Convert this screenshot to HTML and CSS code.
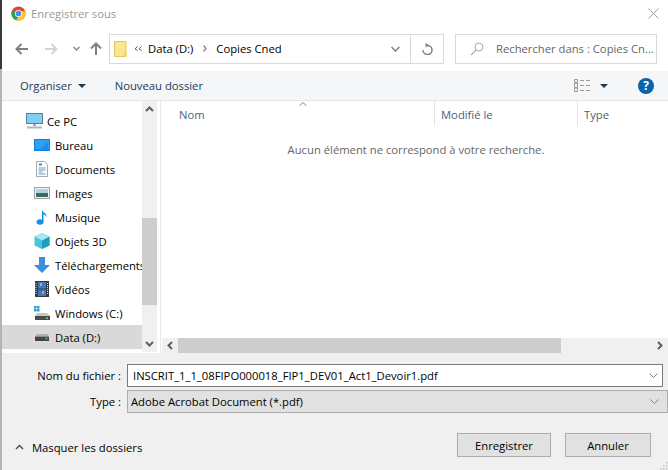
FILE: index.html
```html
<!DOCTYPE html>
<html lang="fr">
<head>
<meta charset="utf-8">
<title>Enregistrer sous</title>
<link rel="stylesheet" href="styles.css">
</head>
<body>
<div class="dialog">
  <header class="titlebar">
    <svg class="chrome" width="15" height="15" viewBox="0 0 16 16"><circle cx="8" cy="8" r="7.500" fill="#e0452f"/><path d="M8 8 1.500 4.200A7.500 7.500 0 0 0 6 15.200Z" fill="#2f9e4d"/><path d="M8 8 6 15.300A7.500 7.500 0 0 0 15.200 5.500H8Z" fill="#f7c52e"/><circle cx="8" cy="8" r="3.800" fill="#fff"/><circle cx="8" cy="8" r="3" fill="#4a8cf0"/></svg>
    <span class="title">Enregistrer sous</span>
    <svg class="close" width="11" height="11" viewBox="0 0 11 11"><path d="M.5.500l10 10M10.500.500l-10 10" stroke="#9a9a9a" fill="none"/></svg>
  </header>
  <nav class="navbar">
    <svg class="nav-ico back" width="13" height="12" viewBox="0 0 13 12"><path d="M13 6H2M6.500 1 1.500 6l5 5" stroke="#7f7f7f" stroke-width="2" fill="none"/></svg>
    <svg class="nav-ico fwd" width="13" height="12" viewBox="0 0 13 12"><path d="M0 6h11M6.500 1l5 5-5 5" stroke="#d2d2d2" stroke-width="2" fill="none"/></svg>
    <svg class="nav-ico drop" width="7" height="5" viewBox="0 0 7 5"><path d="M.5 1l3 3 3-3" stroke="#8a8a8a" stroke-width="1.500" fill="none"/></svg>
    <svg class="nav-ico up" width="12" height="13" viewBox="0 0 12 13"><path d="M6 13V2M1 6.500l5-5 5 5" stroke="#7f7f7f" stroke-width="2" fill="none"/></svg>
    <div class="address">
      <svg class="folder" width="13" height="16" viewBox="0 0 13 16"><path d="M.5.500h11.500v15H.5Z" fill="#fbe58f" stroke="#e7c65e"/><path d="M10 10h2.500v5.500H10Z" fill="#f3d36f"/></svg>
      <svg class="chev" width="8" height="5" viewBox="0 0 8 5"><path d="M3.500.500 1 2.800l2.500 1.700M7.500.500 5 2.800l2.500 1.700" stroke="#555" fill="none"/></svg>
      <span class="crumb">Data (D:)</span>
      <svg class="sep" width="4" height="7" viewBox="0 0 4 7"><path d="M.5.500l2.500 3-2.500 3" stroke="#808080" stroke-width="1.200" fill="none"/></svg>
      <span class="crumb">Copies Cned</span>
      <svg class="addr-drop" width="9" height="6" viewBox="0 0 9 6"><path d="M.5 1l4 4 4-4" stroke="#808080" stroke-width="1.500" fill="none"/></svg>
      <div class="refresh">
        <svg width="11" height="12" viewBox="0 0 11 12"><path d="M5 2.500h.5a4.500 4.500 0 1 1-4.500 4.500" stroke="#808080" stroke-width="1.500" fill="none"/><path d="M3.500 0 7 2.200 3.500 4.500Z" fill="#808080"/></svg>
      </div>
    </div>
    <div class="search">
      <svg width="14" height="14" viewBox="0 0 14 14"><circle cx="9" cy="5" r="4" stroke="#a8a8a8" fill="none"/><path d="M6 8 1 13" stroke="#d0a890" stroke-width="1.300"/></svg>
      <span>Rechercher dans : Copies Cn...</span>
    </div>
  </nav>
  <div class="toolbar">
    <span class="tool">Organiser</span>
    <span class="caret"></span>
    <span class="tool newdir">Nouveau dossier</span>
    <svg class="views" width="17" height="13" viewBox="0 0 17 13"><path d="M.5.500h3v3h-3ZM.5 4.500h3v4h-3ZM.5 9h3v3.500h-3Z" fill="none" stroke="#9a9a9a"/><path d="M6 1.500h4M12 1.500h4M6 6.500h4M12 6.500h4M6 11.500h4M12 11.500h4" stroke="#9a9a9a"/></svg>
    <span class="caret view-caret"></span>
    <span class="help">?</span>
  </div>
  <main class="main">
    <div class="side-wrap">
      <ul class="tree">
        <li class="root"><svg width="17" height="16" viewBox="0 0 17 16"><rect x=".5" y=".5" width="16" height="10" fill="#7fcdf5" stroke="#5c7f99"/><path d="M7 11h3v2H7Z" fill="#9ab"/><path d="M1 14.500h15" stroke="#a9b7c2" stroke-width="2"/></svg><span>Ce PC</span></li>
        <li><svg width="16" height="12" viewBox="0 0 16 12"><rect width="16" height="12" fill="#0f7fdc"/><rect x="1" y="1" width="14" height="9.500" fill="#2ea0f2"/><path d="M6 10.500 14 3v7.500Z" fill="#1e8ee6"/></svg><span>Bureau</span></li>
        <li><svg width="12" height="16" viewBox="0 0 12 16"><path d="M.5.500h8l3 3v12H.5Z" fill="#fdfdfd" stroke="#a8a8a8"/><path d="M3 3.500h3" stroke="#2a8fe0" stroke-width="2"/><path d="M2.500 7h7M2.500 9h7M2.500 11h4M2.500 13h7" stroke="#6b9fb8"/></svg><span>Documents</span></li>
        <li><svg width="16" height="12" viewBox="0 0 16 12"><rect x=".5" y=".5" width="15" height="11" fill="#eef3f5" stroke="#a0a0a0"/><rect x="2" y="2" width="12" height="4" fill="#b5cfe0"/><rect x="2" y="6" width="12" height="4" fill="#3f6a5e"/></svg><span>Images</span></li>
        <li><svg width="12" height="16" viewBox="0 0 12 16"><ellipse cx="4" cy="13" rx="3.500" ry="2.800" fill="#1292ea"/><path d="M6 13V.5c.5 3 5 3.500 4.500 8-.5-2-2.500-3-3-3V13Z" fill="#1292ea"/></svg><span>Musique</span></li>
        <li><svg width="16" height="16" viewBox="0 0 16 16"><path d="M8 0l7.500 3.500v9L8 16 .5 12.500v-9Z" fill="#4cc4d8"/><path d="M8 7.500 15.500 3.500v9L8 16Z" fill="#1c9fc0"/><path d="M8 0l7.500 3.500L8 7.500.5 3.500Z" fill="#a5e8f0"/></svg><span>Objets 3D</span></li>
        <li><svg width="16" height="16" viewBox="0 0 16 16"><path d="M5 0h6v8h5l-8 8-8-8h5Z" fill="#3b8fdc"/></svg><span>Téléchargements</span></li>
        <li><svg width="14" height="16" viewBox="0 0 14 16"><rect width="14" height="16" fill="#3a3a3a"/><rect x="3" y="1" width="8" height="6.500" fill="#3a78c8"/><rect x="3" y="8.500" width="8" height="6.500" fill="#3a78c8"/><rect x="5" y="2" width="2" height="3" fill="#e2a23a"/><rect x="7" y="10" width="2" height="3" fill="#e2a23a"/><path d="M1 2v12" stroke="#ddd" stroke-dasharray="1 1"/><path d="M12.500 2v12" stroke="#ddd" stroke-dasharray="1 1"/></svg><span>Vidéos</span></li>
        <li><svg width="16" height="14" viewBox="0 0 16 14"><path d="M0 0h2.500v2.500H0ZM3 0h2.500v2.500H3ZM0 3h2.500v2.500H0ZM3 3h2.500v2.500H3Z" fill="#1ba1e2"/><path d="M3 7h10l3 3v4H1v-4Z" fill="#c6c6c6"/><rect x="1" y="10" width="15" height="4" fill="#4a4a4a"/><rect x="12" y="11.500" width="2" height="1.500" fill="#5fdc5f"/></svg><span>Windows (C:)</span></li>
        <li class="active"><svg width="14" height="7" viewBox="0 0 16 8"><path d="M2 0h12l2 3H0Z" fill="#b0b0b0"/><rect y="3" width="16" height="5" fill="#444"/><rect x="12" y="4.500" width="2" height="1.500" fill="#5fdc5f"/></svg><span>Data (D:)</span></li>
      </ul>
      <div class="vscroll">
        <svg class="arr" width="9" height="6" viewBox="0 0 9 6"><path d="M1 5l3.500-3.500L8 5" stroke="#606060" stroke-width="2" fill="none"/></svg>
        <div class="track"><div class="vthumb"></div></div>
        <svg class="arr" width="9" height="6" viewBox="0 0 9 6"><path d="M1 1l3.500 3.500L8 1" stroke="#606060" stroke-width="2" fill="none"/></svg>
      </div>
    </div>
    <section class="list">
      <div class="cols">
        <svg class="sort" width="8" height="4" viewBox="0 0 8 4"><path d="M.5 3.800 4 .5l3.500 3.300" stroke="#808080" fill="none"/></svg>
        <div class="col c-name">Nom</div>
        <div class="col c-date">Modifié le</div>
        <div class="col c-type">Type</div>
      </div>
      <p class="empty">Aucun élément ne correspond à votre recherche.</p>
      <div class="hscroll">
        <svg width="6" height="9" viewBox="0 0 6 9"><path d="M5 1 1.500 4.500 5 8" stroke="#606060" stroke-width="2" fill="none"/></svg>
        <div class="htrack"><div class="hthumb"></div></div>
        <svg width="6" height="9" viewBox="0 0 6 9"><path d="M1 1l3.500 3.500L1 8" stroke="#606060" stroke-width="2" fill="none"/></svg>
      </div>
    </section>
  </main>
  <form class="bottom">
    <label class="f-label">Nom du fichier :</label>
    <div class="field name"><span>INSCRIT_1_1_08FIPO000018_FIP1_DEV01_Act1_Devoir1.pdf</span><svg width="9" height="5" viewBox="0 0 9 5"><path d="M.5.500l4 4 4-4" stroke="#808080" fill="none"/></svg></div>
    <label class="f-label">Type :</label>
    <div class="field type"><span>Adobe Acrobat Document (*.pdf)</span><svg width="9" height="5" viewBox="0 0 9 5"><path d="M.5.500l4 4 4-4" stroke="#808080" fill="none"/></svg></div>
  </form>
  <footer class="actions">
    <div class="hide"><svg width="9" height="6" viewBox="0 0 9 6"><path d="M1 5l3.500-3.500L8 5" stroke="#505050" stroke-width="1.500" fill="none"/></svg><span>Masquer les dossiers</span></div>
    <button class="btn save" type="button">Enregistrer</button>
    <button class="btn cancel" type="button">Annuler</button>
    <svg class="grip" width="9" height="9" viewBox="0 0 9 9"><path d="M7 1h1.500v1.500H7ZM4 4h1.500v1.500H4ZM7 4h1.500v1.500H7ZM1 7h1.500v1.500H1ZM4 7h1.500v1.500H4ZM7 7h1.500v1.500H7Z" fill="#c4c4c4"/></svg>
  </footer>
</div>
</body>
</html>
```
FILE: styles.css
```css
* { box-sizing: border-box; }
html, body { margin: 0; padding: 0; }
body {
  width: 668px; height: 470px; overflow: hidden; background: #fff;
  font-family: "Open Sans", "Noto Sans", sans-serif; font-size: 11.25px; color: #000;
}
.dialog {
  width: 668px; height: 470px; display: flex; flex-direction: column; position: relative;
  border-left: 2px solid #a8a8a8;
  border-image: linear-gradient(to bottom, #3a3a3a 0 70px, #b4b4b4 70px) 1;
}
.titlebar { height: 34px; display: flex; align-items: center; padding: 0 9px 7px 9px; flex: none; }
.chrome { flex: none; }
.title { margin-left: 5px; color: #999; }
.close { margin-left: auto; }
.navbar { height: 37px; padding: 0 0 8px 0; display: flex; align-items: center; flex: none; }
.nav-ico { flex: none; }
.back { margin-left: 13px; }
.fwd { margin-left: 17px; }
.drop { margin-left: 15px; }
.up { margin-left: 10px; }
.address {
  margin-left: 7px; width: 335px; height: 30px; border: 1px solid #d9d9d9;
  display: flex; align-items: center; padding-left: 4px; flex: none;
}
.folder { flex: none; }
.chev { margin-left: 7px; flex: none; }
.crumb { margin-left: 6px; }
.sep { margin: 0 3px 0 10px; flex: none; }
.addr-drop { margin-left: auto; margin-right: 10px; flex: none; }
.refresh { width: 33px; height: 28px; border-left: 1px solid #d9d9d9; display: flex; align-items: center; justify-content: center; flex: none; }
.search {
  margin-left: 11px; width: 202px; height: 30px; border: 1px solid #d9d9d9; color: #666; flex: none;
  display: flex; align-items: center; padding-left: 14px; gap: 12px; white-space: nowrap;
}
.search svg { flex: none; }
.toolbar {
  height: 30px; background: #f5f6f7; display: flex; align-items: center; flex: none;
  border-bottom: 1px solid #e4e5e6; padding: 0 14px 0 18px; color: #1e395b;
}
.caret { width: 0; height: 0; border: 4px solid transparent; border-top: 4px solid #1e395b; border-bottom: 0; margin-left: 6px; }
.newdir { margin-left: 29px; }
.views { margin-left: auto; }
.view-caret { margin-left: 9px; }
.help {
  margin-left: 30px; width: 16px; height: 16px; border-radius: 50%; background: #0a63ad; color: #fff;
  font-weight: 700; font-size: 12px; line-height: 16px; text-align: center;
}
.main { height: 252px; display: flex; flex: none; }
.side-wrap { width: 155px; display: flex; flex: none; height: 251px; }
.tree { list-style: none; margin: 0; padding: 8px 0 0 0; width: 140px; flex: none; overflow: hidden; }
.tree li { height: 24px; display: grid; grid-template-columns: 16px auto; column-gap: 5px; align-items: center; justify-items: center; padding-left: 32px; white-space: nowrap; }
.tree li span { justify-self: start; }
.tree li.root { padding-left: 24px; }
.tree li.active { background: #d9d9d9; }
.vscroll { width: 15px; background: #f0f0f0; display: flex; flex-direction: column; align-items: center; }
.arr { flex: none; margin: 5px 0; }
.track { flex: 1; width: 15px; padding-top: 101px; }
.vthumb { height: 87px; background: #cdcdcd; }
.list { flex: 1; position: relative; display: flex; flex-direction: column; margin-left: 3px; border-left: 1px solid #e8e8e8; min-width: 0; }
.cols { height: 25px; display: flex; color: #4c607a; position: relative; flex: none; }
.sort { position: absolute; left: 138px; top: 1px; }
.col { padding: 6px 0 0 18px; height: 25px; }
.c-name { width: 273px; }
.c-date { width: 143px; border-left: 1px solid #e5e5e5; padding-left: 6px; }
.c-type { border-left: 1px solid #e5e5e5; padding-left: 6px; }
.empty { margin: 16px 0 0; text-align: center; color: #666; padding-left: 3px; flex: 1; }
.hscroll { height: 15px; background: #f0f0f0; display: flex; align-items: center; padding: 0 5px; margin-left: 1px; flex: none; }
.htrack { flex: 1; height: 15px; margin: 0 7px 0 5px; }
.hthumb { width: 383px; height: 15px; background: #cdcdcd; }
.bottom {
  background: #f0f0f0; flex: none; height: 60px; padding: 11px 0 0 0;
  display: grid; grid-template-columns: 125px 1fr; grid-auto-rows: 26px;
}
.f-label { text-align: right; padding-right: 6px; line-height: 23px; }
.field { height: 23px; display: flex; align-items: center; justify-content: space-between; white-space: nowrap; }
.field.name { background: #fff; border: 1px solid #7a7a7a; padding: 0 4px 0 5px; margin-right: 5px; }
.field.type { background: #e1e1e1; border: 1px solid #adadad; padding: 0 8px 0 3px; }
.actions { background: #f0f0f0; flex: 1; display: flex; align-items: flex-start; padding: 20px 17px 0 13px; }
.hide { display: flex; align-items: center; gap: 8px; height: 24px; margin-top: 2px; margin-right: auto; }
.btn {
  font: inherit; color: #000; background: #e1e1e1; border: 1px solid #adadad; height: 24px; padding: 0;
}
.save { width: 94px; }
.cancel { width: 86px; margin-left: 14px; }
.grip { position: absolute; right: 0; bottom: 0; }
```
